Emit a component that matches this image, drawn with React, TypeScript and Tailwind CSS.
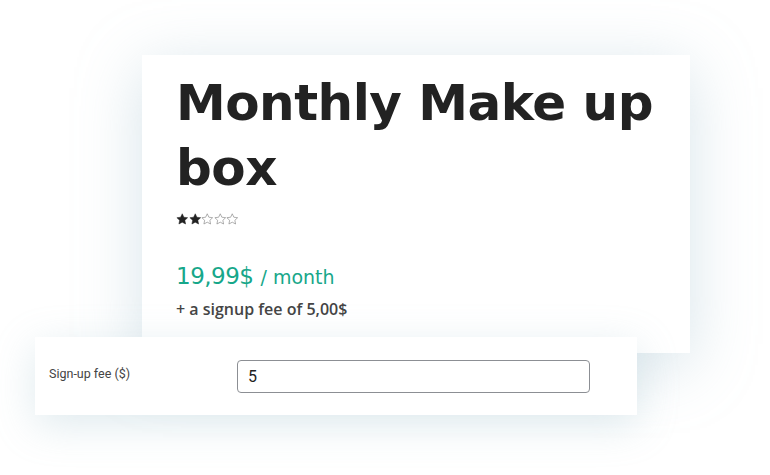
function Star({ filled }: { filled: boolean }) {
  return (
    <svg width="12.5" height="12" viewBox="0 0 24 23">
      <path
        d="M12 1.5l3.1 6.6 7.2.9-5.3 5 1.4 7.1L12 17.6l-6.4 3.5 1.4-7.1-5.3-5 7.2-.9z"
        fill={filled ? "#222" : "none"}
        stroke={filled ? "#222" : "#8a8a8a"}
        strokeWidth={filled ? 1 : 1.3}
        strokeLinejoin="round"
      />
    </svg>
  );
}

export default function App() {
  const font = { fontFamily: '"DejaVu Sans", "Open Sans", sans-serif' };
  return (
    <div className="h-[475px] w-[770px] overflow-hidden bg-white pt-[55px]">
      <div
        className="ml-[142px] h-[298px] w-[548px] bg-white pl-[34px] pt-[16px] shadow-[0_12px_60px_rgba(150,185,200,0.38)]"
        style={font}
      >
        <h1 className="text-[50px] font-bold leading-[65px] tracking-[-0.5px] text-[#222]">
          Monthly Make up box
        </h1>
        <div className="mt-[12px] flex">
          {[0, 1, 2, 3, 4].map((i) => (
            <Star key={i} filled={i < 2} />
          ))}
        </div>
        <div className="mt-[34px] flex items-baseline gap-[7px] text-[#17a78a]">
          <span className="text-[23px] tracking-[-0.5px]">19,99$</span>
          <span className="text-[19px]">/ month</span>
        </div>
        <div
          className="mt-[3px] text-[16px] font-semibold text-[#444]"
          style={{ fontFamily: '"Open Sans", sans-serif' }}
        >
          + a signup fee of 5,00$
        </div>
      </div>
      <div className="relative -mt-[16px] ml-[35px] flex h-[78px] w-[602px] items-center bg-white shadow-[0_10px_40px_rgba(150,185,200,0.3)]">
        <label
          className="ml-[14px] w-[188px] self-start pt-[28px] text-[12.5px] text-[#444]"
          style={{ fontFamily: 'Roboto, "Liberation Sans", sans-serif' }}
        >
          Sign-up fee ($)
        </label>
        <input
          readOnly
          value="5"
          className="h-[33px] w-[353px] rounded-[4px] border border-[#8c8f94] px-[10px] text-[16px] text-[#222] outline-none"
          style={{ fontFamily: 'Roboto, "Liberation Sans", sans-serif' }}
        />
      </div>
    </div>
  );
}
